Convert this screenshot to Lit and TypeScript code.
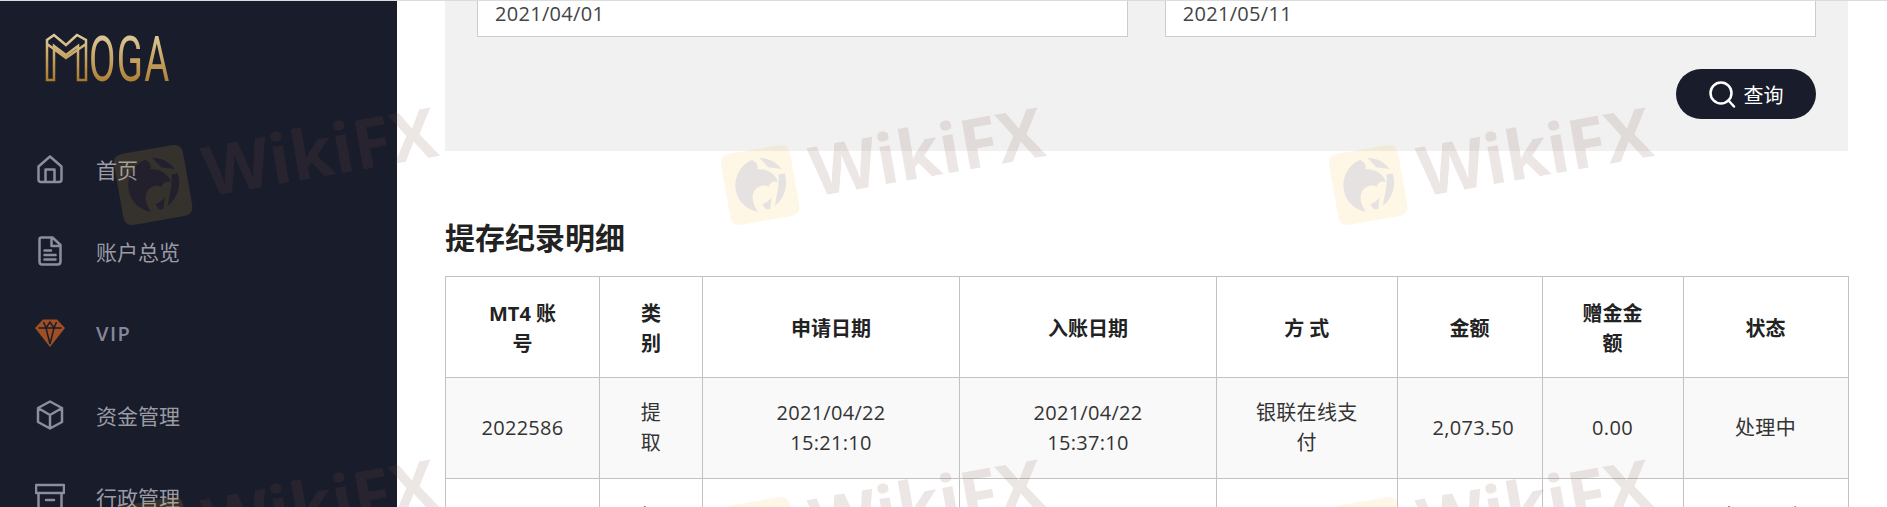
import { LitElement, html, css, svg } from "lit";
import { customElement } from "lit/decorators.js";

const EAGLE =
  "M-4 -25C-17 -22 -25 -10 -25 2C-25 13 -18 23 -7 27C-11 18 -11 10 -6 5C-2 1 4 1 8 4C10 0 14 -1 18 1C17 -7 10 -14 0 -15C2 -19 0 -23 -4 -25ZM4 -26C13 -24 20 -19 24 -11L11 -15ZM20 -6L26 -6C28 6 22 18 11 24C14 14 19 5 20 -6ZM-1 20C2 20 6 18 9 15L6 26C3 27 1 27 -1 20Z";
const SQUARE = "M-25 -35H25Q35 -35 35 -25V27Q35 37 25 37H-25Q-35 37 -35 27V-25Q-35 -35 -25 -35Z";

const MARKS: [number, number][] = [
  [153, 184], [760, 184], [1368, 184],
  [153, 536], [760, 536], [1368, 536],
];

const NAV = [
  { label: "首页", icon: "home" },
  { label: "账户总览", icon: "doc" },
  { label: "VIP", icon: "gem", latin: true },
  { label: "资金管理", icon: "box" },
  { label: "行政管理", icon: "archive" },
];

const HEAD = ["MT4 账号", "类别", "申请日期", "入账日期", "方 式", "金额", "赠金金额", "状态"];
const ROWS: unknown[][] = [
  ["2022586", "提取", html`2021/04/22<br />15:21:10`, html`2021/04/22<br />15:37:10`, "银联在线支付", "2,073.50", "0.00", "处理中"],
  ["", "提取", "", "", "", "", "", "提现已完成"],
];

function navIcon(name: string) {
  switch (name) {
    case "home":
      return html`<svg class="ico" width="30" height="30" viewBox="0 0 30 30"><path d="M3.5 12.5L15 2.5L26.5 12.5V25.5Q26.5 28 24 28H6Q3.5 28 3.5 25.5Z M10.5 28V15.5H19.5V28" /></svg>`;
    case "doc":
      return html`<svg class="ico" width="30" height="30" viewBox="0 0 30 30"><path d="M6.5 1.5H17.5L25.5 9V25.5Q25.5 28.5 22.5 28.5H7Q4.5 28.5 4.5 25.5V3.5Q4.5 1.5 6.5 1.5Z M16.5 1.5V10H25.5 M9.5 14.5H16 M9.5 19H20.5 M9.5 23.5H20.5" /></svg>`;
    case "gem":
      return html`<svg class="gem" width="30" height="30" viewBox="0 0 30 30"><path class="gem-fill" d="M8 1.5H22L30 10L15 29L0 10Z" /><path class="gem-line" d="M3.5 10H26.5 M8.5 4L11 10L15 26L19 10L21.500 4 M11 10L15 4L19 10" /></svg>`;
    case "box":
      return html`<svg class="ico" width="30" height="30" viewBox="0 0 30 30"><path d="M15 1.500L27 8V22L15 28.500L3 22V8Z M3 8L15 15L27 8 M15 15V28.500" /></svg>`;
    default:
      return html`<svg class="ico" width="30" height="30" viewBox="0 0 30 30"><path d="M1 3H29V11H1Z M3.500 11V30H26.500V11 M11 18H19" /></svg>`;
  }
}

@customElement("app-root")
export class AppRoot extends LitElement {
  static styles = css`
    :host {
      display: grid;
      grid-template-columns: 397px 1fr;
      position: relative;
      height: 507px;
      overflow: hidden;
      box-sizing: border-box;
      border-top: 1px solid #dcdcdc;
      background: #fff;
      font-family: "Open Sans", "Noto Sans CJK SC", sans-serif;
      color: #333;
    }
    .side {
      background: #191c2b;
      min-width: 0;
    }
    .logo {
      display: block;
      height: 127px;
    }
    .item {
      display: flex;
      align-items: center;
      gap: 31px;
      height: 82px;
      padding-left: 35px;
      font-size: 21px;
      color: #9a9ba3;
    }
    .item.latin {
      font-size: 20px;
      font-weight: 600;
      letter-spacing: 1.5px;
      color: #858897;
    }
    .ico {
      flex: none;
      fill: none;
      stroke: #8c8e9b;
      stroke-width: 2.5;
      stroke-linejoin: round;
      stroke-linecap: round;
    }
    .gem {
      flex: none;
    }
    .gem-fill {
      fill: #a04e24;
    }
    .gem-line {
      fill: none;
      stroke: #191c2b;
      stroke-width: 1.500;
    }
    .main {
      padding: 0 39.5px 0 48px;
      min-width: 0;
    }
    .panel {
      background: #f1f1f1;
      padding: 0 32px 32px;
    }
    .fields {
      display: grid;
      grid-template-columns: 1fr 1fr;
      gap: 37px;
    }
    .field {
      box-sizing: border-box;
      height: 36px;
      padding: 0 0 8px 17px;
      line-height: 25px;
      background: #fff;
      border: 1px solid #ccc;
      border-top: 0;
      font-size: 20px;
      letter-spacing: 0.3px;
      color: #444;
    }
    .actions {
      display: flex;
      justify-content: flex-end;
      margin-top: 32px;
    }
    .btn {
      display: flex;
      align-items: center;
      justify-content: center;
      gap: 8px;
      box-sizing: border-box;
      width: 140px;
      height: 50px;
      border-radius: 25px;
      background: #191c2b;
      color: #fff;
      font-size: 20px;
    }
    .btn svg {
      fill: none;
      stroke: #fff;
      stroke-width: 2.500;
      stroke-linecap: round;
    }
    h2 {
      margin: 64px 0 16px;
      font-size: 30px;
      line-height: 45px;
      font-weight: 700;
      color: #222;
    }
    table {
      width: 100%;
      table-layout: fixed;
      border-collapse: collapse;
      font-size: 20px;
      line-height: 30px;
      text-align: center;
    }
    th, td {
      height: 101px;
      box-sizing: border-box;
      padding: 0 35px;
      border: 1px solid #c2c2c2;
    }
    th {
      padding-top: 3px;
      font-weight: 700;
      color: #222;
    }
    td {
      color: #333;
      letter-spacing: 0.3px;
    }
    tbody tr:nth-child(odd) {
      background: #f9f9f9;
    }
    tbody tr:nth-child(even) td {
      padding-top: 6px;
    }
    .c1 { width: 154px; }
    .c2 { width: 103px; }
    .c3 { width: 257px; }
    .c4 { width: 257px; }
    .c5 { width: 180.500px; }
    .c6 { width: 145px; }
    .c7 { width: 141px; }
    .c8 { width: 165px; }
    .marks {
      position: absolute;
      inset: -1px 0 0 0;
      width: 100%;
      height: 508px;
      pointer-events: none;
    }
    .mk-square {
      fill: rgba(245, 190, 60, 0.13);
      fill-rule: evenodd;
    }
    .mk-eagle {
      fill: rgba(90, 60, 60, 0.15);
    }
    .mk-text {
      font-family: "Open Sans", sans-serif;
      font-weight: 700;
      font-size: 69px;
      fill: rgba(130, 85, 75, 0.15);
    }
  `;

  private logo() {
    return html`<svg class="logo" width="397" height="127" viewBox="0 1 397 127">
      <defs>
        <linearGradient id="gold" gradientUnits="userSpaceOnUse" x1="0" y1="33" x2="0" y2="81">
          <stop offset="0" stop-color="#e0cfa4" />
          <stop offset="0.5" stop-color="#c6a360" />
          <stop offset="1" stop-color="#a9792b" />
        </linearGradient>
        <linearGradient id="goldText" x1="0" y1="0" x2="0" y2="1">
          <stop offset="0.15" stop-color="#dcc99a" />
          <stop offset="0.5" stop-color="#c6a360" />
          <stop offset="0.85" stop-color="#a9792b" />
        </linearGradient>
      </defs>
      <path d="M47 80V40L54 35L66 45L77 35L86 40V80H78V46L66 55L54 46V80Z M47 44L66 58L86 44" fill="none" stroke="url(#gold)" stroke-width="2.500" stroke-linejoin="miter" />
      <text transform="translate(89 81) scale(0.63 1.02)" font-family="Roboto" font-weight="400" font-size="61" letter-spacing="2" fill="url(#goldText)">OGA</text>
    </svg>`;
  }

  private marks() {
    return html`<svg class="marks" viewBox="0 0 1887 508">
      ${MARKS.map(
        ([x, y]) => svg`<g transform="translate(${x} ${y}) rotate(-10)">
          <path class="mk-square" d="${SQUARE + EAGLE}" />
          <path class="mk-eagle" d="${EAGLE}" />
          <text class="mk-text" x="52" y="22">WikiFX</text>
        </g>`
      )}
    </svg>`;
  }

  render() {
    return html`
      <aside class="side">
        ${this.logo()}
        <nav>
          ${NAV.map(
            (n) => html`<div class="item ${n.latin ? "latin" : ""}">${navIcon(n.icon)}<span>${n.label}</span></div>`
          )}
        </nav>
      </aside>
      <main class="main">
        <section class="panel">
          <div class="fields">
            <div class="field">2021/04/01</div>
            <div class="field">2021/05/11</div>
          </div>
          <div class="actions">
            <div class="btn">
              <svg width="28" height="28" viewBox="0 0 28 28"><circle cx="13" cy="13" r="10.500" /><path d="M20.500 20.500L26 26.500" /></svg>
              <span>查询</span>
            </div>
          </div>
        </section>
        <h2>提存纪录明细</h2>
        <table>
          <colgroup>
            ${HEAD.map((_, i) => html`<col class="c${i + 1}" />`)}
          </colgroup>
          <thead>
            <tr>${HEAD.map((h) => html`<th>${h}</th>`)}</tr>
          </thead>
          <tbody>
            ${ROWS.map((r) => html`<tr>${r.map((c) => html`<td>${c}</td>`)}</tr>`)}
          </tbody>
        </table>
      </main>
      ${this.marks()}
    `;
  }
}
